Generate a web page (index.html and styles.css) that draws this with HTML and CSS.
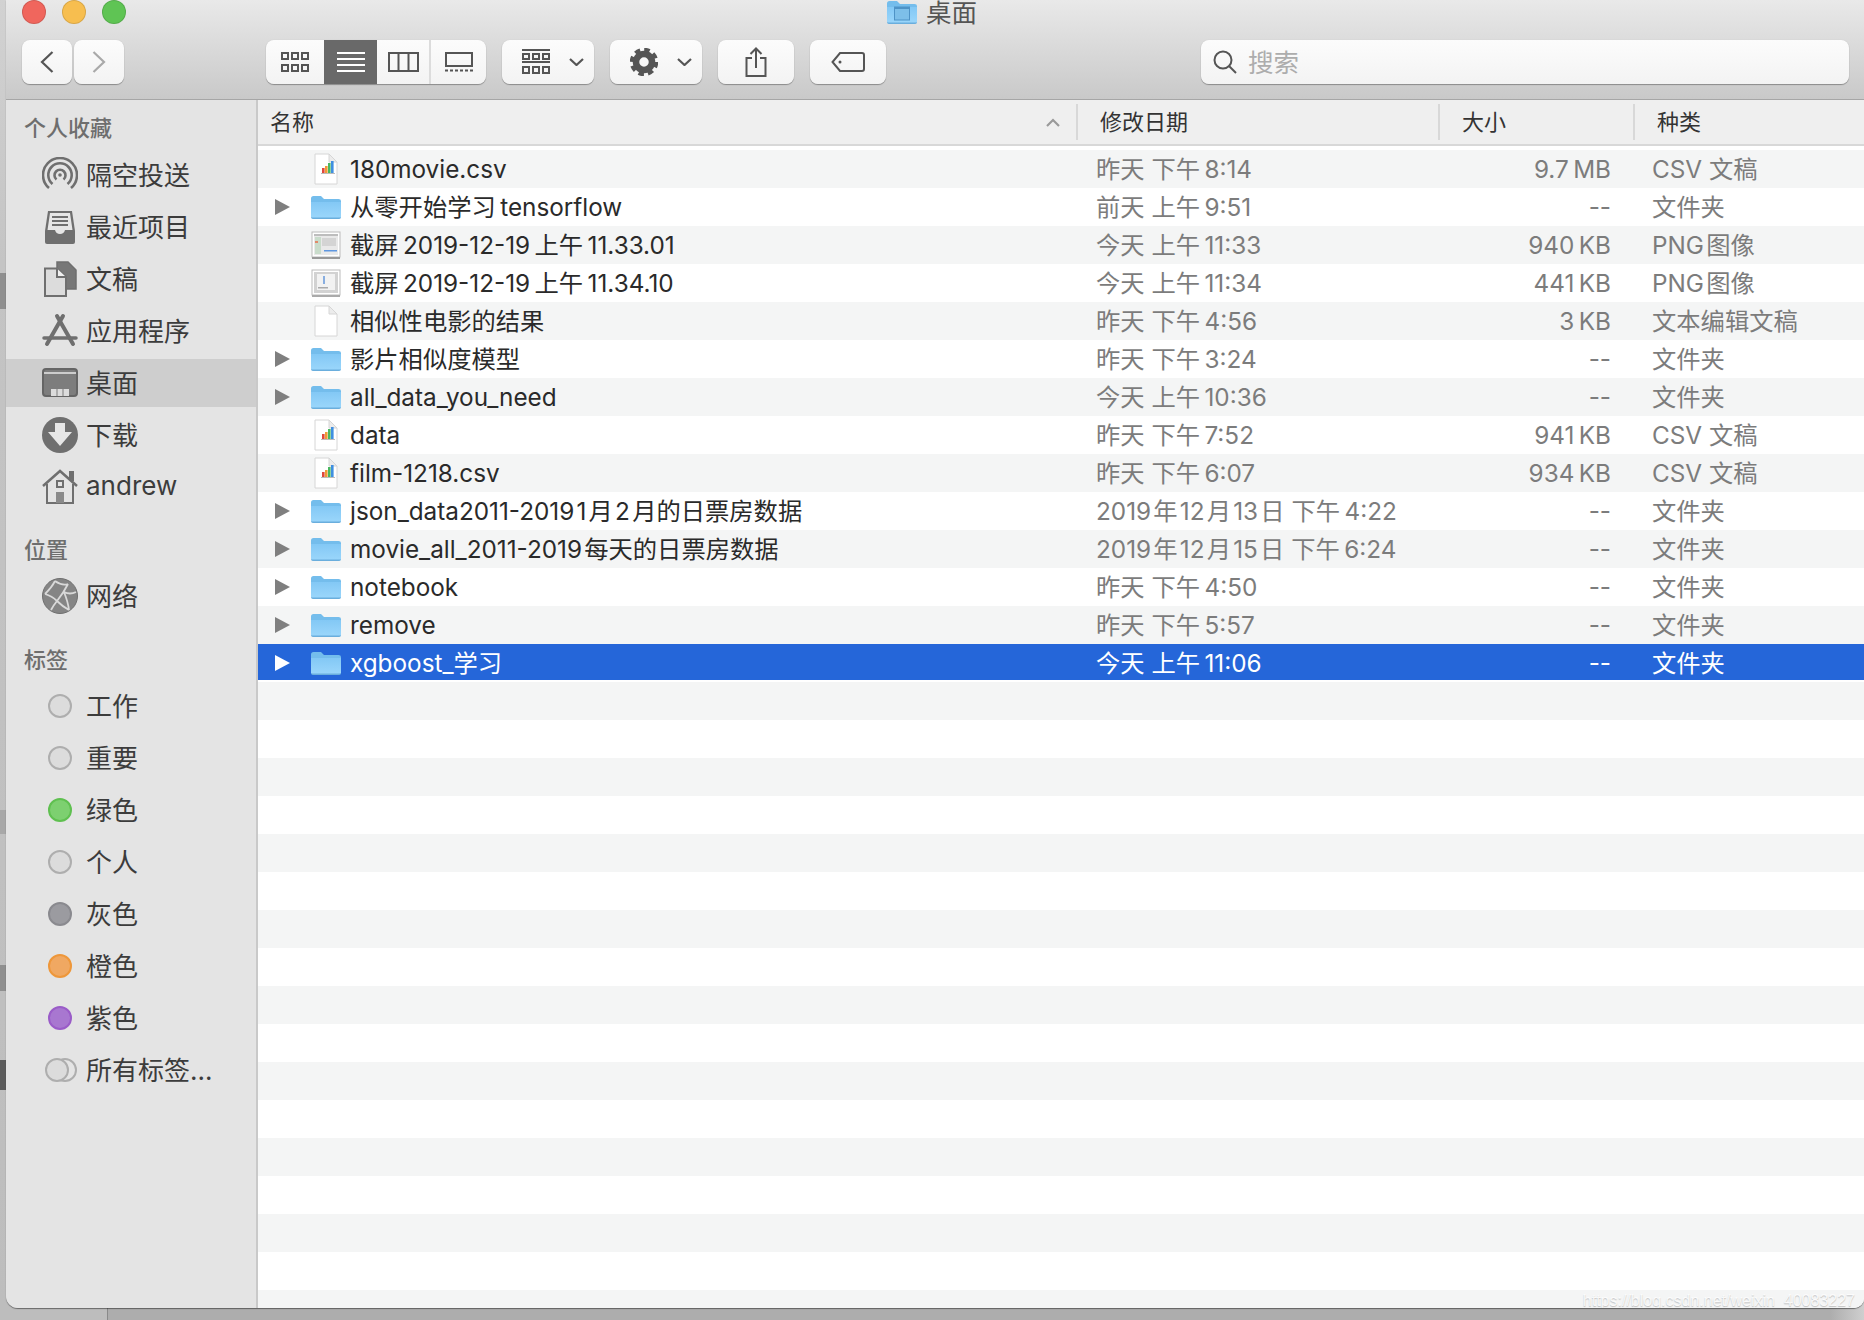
FILE: index.html
```html
<!DOCTYPE html>
<html lang="zh-CN">
<head>
    <meta charset="UTF-8">
    <title>桌面</title>
    <link rel="stylesheet" href="styles.css">
</head>
<body>
    <!-- shared icons -->
    <svg class="sprite" aria-hidden="true">
        <defs>
            <linearGradient id="folderFill" x1="0" y1="0" x2="0" y2="1">
                <stop offset="0" stop-color="#83c8f5"/>
                <stop offset="1" stop-color="#9ad6fb"/>
            </linearGradient>
            <symbol id="folder" viewBox="0 0 30 24">
                <path d="M0 3.500Q0 1 2.500 1H10l3 3H27.500Q30 4 30 6V21.500Q30 23.500 27.500 23.500H2.500Q0 23.500 0 21.500Z" fill="#74bdec"/>
                <path d="M0 7H30V21.500Q30 23 27.500 23H2.500Q0 23 0 21.500Z" fill="url(#folderFill)"/>
                <path d="M0 22.500H30V22.800Q29.500 24 27.500 24H2.500Q.5 24 0 22.800Z" fill="#6aaedd"/>
            </symbol>
            <symbol id="doc" viewBox="0 0 24 32">
                <path d="M1 1H15L23 9V31H1Z" fill="#fff" stroke="#d6d6d6"/>
                <path d="M15 1V9H23Z" fill="#ececec" stroke="#d6d6d6"/>
            </symbol>
            <symbol id="csv" viewBox="0 0 24 32">
                <use href="#doc" width="24" height="32"/>
                <rect x="8" y="15" width="2.600" height="5" fill="#e0483c"/>
                <rect x="11" y="13" width="2.600" height="7" fill="#ef9a36"/>
                <rect x="14" y="10" width="2.600" height="10" fill="#49b760"/>
                <rect x="17" y="8" width="2.600" height="12" fill="#3f8fe0"/>
                <path d="M7 20.500H21" stroke="#bbb"/>
            </symbol>
            <symbol id="shotA" viewBox="0 0 30 28">
                <rect x="1" y="1" width="28" height="25" fill="#fff" stroke="#bbb"/>
                <rect x="3" y="3" width="24" height="21" fill="#e9e9e9"/>
                <rect x="3" y="3" width="24" height="2" fill="#bdbdbd"/>
                <rect x="4" y="6" width="6" height="17" fill="#c9dccb"/>
                <rect x="4" y="10" width="3" height="2" fill="#e08a6a"/>
                <rect x="11" y="7" width="14" height="8" fill="#d4d4d4"/>
                <rect x="13" y="19" width="13" height="1.500" fill="#5f97e0"/>
                <rect x="1" y="26" width="28" height="2" fill="#999"/>
            </symbol>
            <symbol id="shotB" viewBox="0 0 30 28">
                <rect x="1" y="1" width="28" height="25" fill="#fff" stroke="#bbb"/>
                <rect x="3" y="3" width="24" height="21" fill="#d2d2d2"/>
                <rect x="6" y="5" width="18" height="16" fill="#f2f2f2"/>
                <rect x="12" y="7" width="2" height="8" fill="#88aee0"/>
                <rect x="7" y="18" width="10" height="1.500" fill="#aaa"/>
                <rect x="1" y="26" width="28" height="2" fill="#aaa"/>
            </symbol>
            <symbol id="chevron" viewBox="0 0 15 8">
                <path d="M1 1L7.500 7L14 1" fill="none" stroke="#555" stroke-width="2.200"/>
            </symbol>
        </defs>
    </svg>

    <div class="backdrop">
        <i class="ghost ghost-a"></i>
        <i class="ghost ghost-b"></i>
        <i class="ghost ghost-c"></i>
        <i class="ghost ghost-d"></i>
    </div>

    <div class="window">
        <header class="toolbar">
            <div class="titlebar">
                <div class="lights">
                    <span class="light red"></span>
                    <span class="light yellow"></span>
                    <span class="light green"></span>
                </div>
                <div class="title">
                    <svg width="30" height="24" viewBox="0 0 30 24">
                        <use href="#folder" width="30" height="24"/>
                        <rect x="7.500" y="7" width="15" height="13" fill="#7dbfe9" stroke="#4e93c6"/>
                        <rect x="7.500" y="7" width="15" height="2" fill="#4e93c6"/>
                    </svg>
                    <span>桌面</span>
                </div>
            </div>

            <div class="tools">
                <div class="nav">
                    <button class="btn nav-btn">
                        <svg width="14" height="22" viewBox="0 0 14 22"><path d="M12.500 1L2 11L12.500 21" fill="none" stroke="#555" stroke-width="2.200"/></svg>
                    </button>
                    <button class="btn nav-btn">
                        <svg width="14" height="22" viewBox="0 0 14 22"><path d="M1.500 1L12 11L1.500 21" fill="none" stroke="#a9a9a9" stroke-width="2.200"/></svg>
                    </button>
                </div>

                <div class="btn views">
                    <span class="view view-icons">
                        <svg width="28" height="20" viewBox="0 0 28 20" fill="none" stroke="#555" stroke-width="2">
                            <rect x="1" y="1" width="6" height="6"/><rect x="11" y="1" width="6" height="6"/><rect x="21" y="1" width="6" height="6"/>
                            <rect x="1" y="13" width="6" height="6"/><rect x="11" y="13" width="6" height="6"/><rect x="21" y="13" width="6" height="6"/>
                        </svg>
                    </span>
                    <span class="view view-list active">
                        <svg width="28" height="20" viewBox="0 0 28 20" stroke="#fff" stroke-width="2">
                            <path d="M0 1H28M0 7H28M0 13H28M0 19H28"/>
                        </svg>
                    </span>
                    <span class="view view-cols">
                        <svg width="31" height="20" viewBox="0 0 31 20" fill="none" stroke="#555" stroke-width="2">
                            <rect x="1" y="1" width="29" height="18"/><path d="M10.500 1V19M20.500 1V19"/>
                        </svg>
                    </span>
                    <span class="view view-gallery">
                        <svg width="28" height="20" viewBox="0 0 28 20" fill="none" stroke="#555" stroke-width="2">
                            <rect x="1" y="1" width="26" height="13"/>
                            <path d="M0 18.500H3M5 18.500H8M10 18.500H13M15 18.500H18M20 18.500H23M25 18.500H28"/>
                        </svg>
                    </span>
                </div>

                <button class="btn menu-btn arrange">
                    <svg width="28" height="26" viewBox="0 0 28 26" fill="none" stroke="#555" stroke-width="2">
                        <path d="M0 1H28M0 13H28"/>
                        <rect x="1" y="5" width="6" height="5"/><rect x="11" y="5" width="6" height="5"/><rect x="21" y="5" width="6" height="5"/>
                        <rect x="1" y="18" width="6" height="6"/><rect x="11" y="18" width="6" height="6"/><rect x="21" y="18" width="6" height="6"/>
                    </svg>
                    <svg width="15" height="8"><use href="#chevron" width="15" height="8"/></svg>
                </button>

                <button class="btn menu-btn gear">
                    <svg width="28" height="28" viewBox="0 0 28 28" fill="none" stroke="#555">
                        <circle cx="14" cy="14" r="8" stroke-width="6.500"/>
                        <circle cx="14" cy="14" r="12" stroke-width="4.500" stroke-dasharray="5.400 4"/>
                    </svg>
                    <svg width="15" height="8"><use href="#chevron" width="15" height="8"/></svg>
                </button>

                <button class="btn icon-btn">
                    <svg width="22" height="30" viewBox="0 0 22 30" fill="none" stroke="#555" stroke-width="2">
                        <path d="M7 11H1.500V29H20.500V11H15"/>
                        <path d="M11 21V1.500M5.500 7L11 1.500L16.500 7"/>
                    </svg>
                </button>

                <button class="btn icon-btn">
                    <svg width="34" height="20" viewBox="0 0 34 20" fill="none" stroke="#555" stroke-width="2">
                        <path d="M9 1H31Q33 1 33 3V17Q33 19 31 19H9L1.500 10Z"/>
                        <circle cx="9" cy="10" r="1.500" fill="#555" stroke="none"/>
                    </svg>
                </button>

                <div class="btn search">
                    <svg width="24" height="24" viewBox="0 0 24 24" fill="none" stroke="#555" stroke-width="2">
                        <circle cx="10" cy="10" r="8.500"/><path d="M16 16L23 23"/>
                    </svg>
                    <span>搜索</span>
                </div>
            </div>
        </header>

        <div class="main">
            <aside class="sidebar">
                <h3 class="side-title">个人收藏</h3>
                <ul class="side-list first">
                    <li class="side-item">
                        <svg class="side-icon" viewBox="0 0 36 36" fill="none" stroke="#6f6f6f" stroke-width="2.600">
                            <path d="M7 31A17 17 0 1 1 29 31"/>
                            <path d="M10.500 27A11.700 11.700 0 1 1 25.500 27"/>
                            <path d="M14.500 22.500A5.500 5.500 0 1 1 21.500 22.500"/>
                            <circle cx="18" cy="18" r="1.800" fill="#6f6f6f" stroke="none"/>
                        </svg>
                        隔空投送
                    </li>
                    <li class="side-item">
                        <svg class="side-icon" viewBox="0 0 36 36">
                            <path d="M6 2H30L33 22V33Q33 35 31 35H5Q3 35 3 33V22Z" fill="#6f6f6f"/>
                            <path d="M8 4H28L30.500 21H23Q22 25 18 25Q14 25 13 21H5.500Z" fill="#e6e6e6"/>
                            <path d="M10 8H26M10 12H26M10 16H26" stroke="#6f6f6f" stroke-width="2"/>
                        </svg>
                        最近项目
                    </li>
                    <li class="side-item">
                        <svg class="side-icon" viewBox="0 0 36 36">
                            <path d="M15 1H26L34 9V28H15Z" fill="#777" stroke="#6f6f6f" stroke-width="1.500"/>
                            <path d="M3 7.500H15L24 16V35H3Z" fill="#dcdcdc" stroke="#6f6f6f" stroke-width="2"/>
                            <path d="M15 7.500V16H24" fill="#f0f0f0" stroke="#6f6f6f" stroke-width="2"/>
                        </svg>
                        文稿
                    </li>
                    <li class="side-item">
                        <svg class="side-icon" viewBox="0 0 36 36" fill="none" stroke="#6f6f6f" stroke-linecap="round">
                            <path d="M15 3L31 31" stroke-width="4"/>
                            <path d="M21 3L5 31" stroke-width="4"/>
                            <path d="M2 25H34" stroke-width="3.500"/>
                        </svg>
                        应用程序
                    </li>
                    <li class="side-item selected">
                        <svg class="side-icon" viewBox="0 0 36 30">
                            <rect x="1" y="1" width="34" height="27" rx="3" fill="#7d7d7d" stroke="#656565" stroke-width="2"/>
                            <path d="M2 5H34" stroke="#e8e8e8" stroke-width="1.500"/>
                            <rect x="9" y="21" width="18" height="7" fill="#dcdcdc"/>
                            <path d="M15 21V28M21 21V28" stroke="#7d7d7d"/>
                        </svg>
                        桌面
                    </li>
                    <li class="side-item">
                        <svg class="side-icon" viewBox="0 0 36 36">
                            <circle cx="18" cy="18" r="18" fill="#6f6f6f"/>
                            <path d="M13 6H23V15H30L18 29L6 15H13Z" fill="#e6e6e6"/>
                        </svg>
                        下载
                    </li>
                    <li class="side-item">
                        <svg class="side-icon" viewBox="0 0 36 36" fill="none" stroke="#6f6f6f" stroke-width="2">
                            <path d="M1 17L18 2L35 17" stroke-width="2.500"/>
                            <path d="M28 10V3H31V12" fill="#6f6f6f"/>
                            <path d="M5 15V34H31V15"/>
                            <rect x="15" y="12" width="6" height="6"/>
                            <rect x="14" y="23" width="8" height="11" fill="#8a8a8a" stroke="none"/>
                        </svg>
                        andrew
                    </li>
                </ul>

                <h3 class="side-title second">位置</h3>
                <ul class="side-list">
                    <li class="side-item">
                        <svg class="side-icon" viewBox="0 0 36 36" fill="none">
                            <circle cx="18" cy="18" r="17.500" fill="#858585" stroke="#6f6f6f"/>
                            <path d="M3 16Q10 9 13 3M3 16Q10 18 15 23T27 32M13 3Q20 8 26 6M26 6Q22 14 15 23M22 14Q28 17 34 14M22 14Q26 24 27 32M15 23Q11 28 9 32" stroke="#d9d9d9" stroke-width="1.800"/>
                        </svg>
                        网络
                    </li>
                </ul>

                <h3 class="side-title second">标签</h3>
                <ul class="side-list">
                    <li class="side-item"><span class="tag-box"><i class="tag"></i></span>工作</li>
                    <li class="side-item"><span class="tag-box"><i class="tag"></i></span>重要</li>
                    <li class="side-item"><span class="tag-box"><i class="tag tag-green"></i></span>绿色</li>
                    <li class="side-item"><span class="tag-box"><i class="tag"></i></span>个人</li>
                    <li class="side-item"><span class="tag-box"><i class="tag tag-gray"></i></span>灰色</li>
                    <li class="side-item"><span class="tag-box"><i class="tag tag-orange"></i></span>橙色</li>
                    <li class="side-item"><span class="tag-box"><i class="tag tag-purple"></i></span>紫色</li>
                    <li class="side-item">
                        <svg class="side-icon" viewBox="0 0 36 36" fill="none" stroke="#aeaeae" stroke-width="2">
                            <circle cx="23" cy="18" r="11" fill="#e4e4e4"/>
                            <circle cx="15" cy="18" r="11" fill="#dcdcdc"/>
                        </svg>
                        所有标签...
                    </li>
                </ul>
            </aside>

            <section class="list">
                <div class="list-head">
                    <div class="head-cell head-name">名称
                        <svg width="14" height="9" viewBox="0 0 14 9"><path d="M1 8L7 2L13 8" fill="none" stroke="#9a9a9a" stroke-width="2.200"/></svg>
                    </div>
                    <div class="head-cell">修改日期</div>
                    <div class="head-cell">大小</div>
                    <div class="head-cell">种类</div>
                </div>

                <div class="list-body">
                    <div class="row">
                        <div class="name"><i class="arrow none"></i><svg class="file-icon"><use href="#csv" x="3" y="3" width="24" height="32"/></svg>180movie.csv</div>
                        <div class="date">昨天 下午&thinsp;8:14</div><div class="size">9.7&thinsp;MB</div><div class="kind">CSV 文稿</div>
                    </div>
                    <div class="row">
                        <div class="name"><i class="arrow"></i><svg class="file-icon"><use href="#folder" y="7" width="30" height="24"/></svg>从零开始学习&thinsp;tensorflow</div>
                        <div class="date">前天 上午&thinsp;9:51</div><div class="size">--</div><div class="kind">文件夹</div>
                    </div>
                    <div class="row">
                        <div class="name"><i class="arrow none"></i><svg class="file-icon"><use href="#shotA" y="5" width="30" height="28"/></svg>截屏&thinsp;2019-12-19&thinsp;上午&thinsp;11.33.01</div>
                        <div class="date">今天 上午&thinsp;11:33</div><div class="size">940&thinsp;KB</div><div class="kind">PNG&hairsp;图像</div>
                    </div>
                    <div class="row">
                        <div class="name"><i class="arrow none"></i><svg class="file-icon"><use href="#shotB" y="5" width="30" height="28"/></svg>截屏&thinsp;2019-12-19&thinsp;上午&thinsp;11.34.10</div>
                        <div class="date">今天 上午&thinsp;11:34</div><div class="size">441&thinsp;KB</div><div class="kind">PNG&hairsp;图像</div>
                    </div>
                    <div class="row">
                        <div class="name"><i class="arrow none"></i><svg class="file-icon"><use href="#doc" x="3" y="3" width="24" height="32"/></svg>相似性电影的结果</div>
                        <div class="date">昨天 下午&thinsp;4:56</div><div class="size">3&thinsp;KB</div><div class="kind">文本编辑文稿</div>
                    </div>
                    <div class="row">
                        <div class="name"><i class="arrow"></i><svg class="file-icon"><use href="#folder" y="7" width="30" height="24"/></svg>影片相似度模型</div>
                        <div class="date">昨天 下午&thinsp;3:24</div><div class="size">--</div><div class="kind">文件夹</div>
                    </div>
                    <div class="row">
                        <div class="name"><i class="arrow"></i><svg class="file-icon"><use href="#folder" y="7" width="30" height="24"/></svg>all_data_you_need</div>
                        <div class="date">今天 上午&thinsp;10:36</div><div class="size">--</div><div class="kind">文件夹</div>
                    </div>
                    <div class="row">
                        <div class="name"><i class="arrow none"></i><svg class="file-icon"><use href="#csv" x="3" y="3" width="24" height="32"/></svg>data</div>
                        <div class="date">昨天 下午&thinsp;7:52</div><div class="size">941&thinsp;KB</div><div class="kind">CSV 文稿</div>
                    </div>
                    <div class="row">
                        <div class="name"><i class="arrow none"></i><svg class="file-icon"><use href="#csv" x="3" y="3" width="24" height="32"/></svg>film-1218.csv</div>
                        <div class="date">昨天 下午&thinsp;6:07</div><div class="size">934&thinsp;KB</div><div class="kind">CSV 文稿</div>
                    </div>
                    <div class="row">
                        <div class="name"><i class="arrow"></i><svg class="file-icon"><use href="#folder" y="7" width="30" height="24"/></svg>json_data2011-2019&hairsp;1&hairsp;月&hairsp;2&hairsp;月的日票房数据</div>
                        <div class="date">2019&hairsp;年&hairsp;12&hairsp;月&hairsp;13&hairsp;日 下午&thinsp;4:22</div><div class="size">--</div><div class="kind">文件夹</div>
                    </div>
                    <div class="row">
                        <div class="name"><i class="arrow"></i><svg class="file-icon"><use href="#folder" y="7" width="30" height="24"/></svg>movie_all_2011-2019&hairsp;每天的日票房数据</div>
                        <div class="date">2019&hairsp;年&hairsp;12&hairsp;月&hairsp;15&hairsp;日 下午&thinsp;6:24</div><div class="size">--</div><div class="kind">文件夹</div>
                    </div>
                    <div class="row">
                        <div class="name"><i class="arrow"></i><svg class="file-icon"><use href="#folder" y="7" width="30" height="24"/></svg>notebook</div>
                        <div class="date">昨天 下午&thinsp;4:50</div><div class="size">--</div><div class="kind">文件夹</div>
                    </div>
                    <div class="row">
                        <div class="name"><i class="arrow"></i><svg class="file-icon"><use href="#folder" y="7" width="30" height="24"/></svg>remove</div>
                        <div class="date">昨天 下午&thinsp;5:57</div><div class="size">--</div><div class="kind">文件夹</div>
                    </div>
                    <div class="row selected">
                        <div class="name"><i class="arrow"></i><svg class="file-icon"><use href="#folder" y="7" width="30" height="24"/></svg>xgboost_学习</div>
                        <div class="date">今天 上午&thinsp;11:06</div><div class="size">--</div><div class="kind">文件夹</div>
                    </div>
                </div>
            </section>
        </div>

        <div class="watermark">https://blog.csdn.net/weixin_40083227</div>
    </div>
</body>
</html>
```

FILE: styles.css
```css
* {
    box-sizing: border-box;
}
body {
    margin: 0;
    width: 1864px;
    height: 1320px;
    overflow: hidden;
    position: relative;
    font-family: Inter, "Noto Sans CJK SC", sans-serif;
    background: linear-gradient(to right, #bdbdbd 0 107px, #8a8a8a 107px 108px, #adadad 108px 1830px, #cfcfcf);
}
.sprite {
    position: absolute;
    width: 0;
    height: 0;
}

/* what shows of the windows behind, left of this one */
.backdrop {
    position: absolute;
    left: 0;
    top: 0;
    width: 6px;
    height: 1308px;
    background: linear-gradient(#d2d2d2, #c4c4c4 20%, #bdbdbd);
}
.ghost {
    position: absolute;
    left: 0;
    width: 6px;
    background: #8f8f8f;
}
.ghost-a {
    top: 273px;
    height: 36px;
}
.ghost-b {
    top: 810px;
    height: 24px;
    background: #a8a8a8;
}
.ghost-c {
    top: 965px;
    height: 26px;
}
.ghost-d {
    top: 1060px;
    height: 30px;
    background: #5c5c5c;
}

.window {
    position: relative;
    margin-left: 6px;
    width: 1858px;
    height: 1308px;
    display: flex;
    flex-direction: column;
    overflow: hidden;
    border-radius: 0 0 10px 12px;
    box-shadow: 0 1px 1px rgba(0, 0, 0, 0.45);
}

/* toolbar */
.toolbar {
    height: 100px;
    flex: none;
    background: linear-gradient(#e9e9e9, #c9c9c9);
    border-bottom: 1px solid #a6a6a6;
}
.titlebar {
    height: 40px;
    display: grid;
    grid-template-columns: 1fr auto 1fr;
    align-items: start;
}
.lights {
    display: flex;
    gap: 16px;
    padding-left: 16px;
}
.light {
    width: 24px;
    height: 24px;
    border-radius: 50%;
    border: 1px solid rgba(0, 0, 0, 0.12);
}
.red {
    background: #f0665d;
}
.yellow {
    background: #f7be4f;
}
.green {
    background: #5fc454;
}
.title {
    display: flex;
    align-items: flex-start;
    gap: 9px;
    font-size: 25.500px;
    color: #555;
    transform: translateX(-3px);
}
.title span {
    line-height: 26px;
    height: 26px;
}
.tools {
    display: flex;
    height: 44px;
    padding: 0 15px 0 16px;
}
.btn {
    padding: 0;
    border: none;
    border-radius: 8px;
    height: 44px;
    background: linear-gradient(#fcfcfc, #f3f3f3);
    box-shadow: 0 1px 1px rgba(0, 0, 0, 0.32), 0 0 1px rgba(0, 0, 0, 0.15);
    display: flex;
    align-items: center;
    justify-content: center;
}
.nav {
    display: flex;
    gap: 2px;
}
.nav-btn {
    width: 50px;
}
.views {
    margin-left: 142px;
    width: 220px;
    overflow: hidden;
    justify-content: flex-start;
}
.view {
    height: 44px;
    display: flex;
    align-items: center;
    justify-content: center;
}
.view-icons {
    width: 58px;
}
.view-list {
    width: 53px;
}
.view-cols {
    width: 54px;
    border-right: 2px solid #dcdcdc;
}
.view-gallery {
    width: 55px;
}
.active {
    background: #696969;
}
.menu-btn {
    justify-content: flex-start;
}
.arrange {
    margin-left: 16px;
    width: 92px;
    padding-left: 20px;
    gap: 19px;
}
.gear {
    margin-left: 16px;
    width: 92px;
    padding-left: 20px;
    gap: 19px;
}
.icon-btn {
    margin-left: 16px;
    width: 76px;
}
.search {
    margin-left: auto;
    width: 648px;
    justify-content: flex-start;
    padding-left: 12px;
    gap: 11px;
    font-size: 25.500px;
    color: #adadad;
}
.search span {
    margin-top: -3px;
}

.main {
    flex: 1;
    display: flex;
    min-height: 0;
}

/* sidebar */
.sidebar {
    width: 252px;
    flex: none;
    padding-top: 8px;
    background: #e4e4e4;
    border-right: 2px solid #c9c9c9;
}
.side-title {
    margin: 0;
    height: 40px;
    line-height: 40px;
    padding-left: 18px;
    font-size: 22px;
    font-weight: 500;
    color: #6e6e6e;
}
.second {
    margin-top: 19px;
}
.side-list {
    list-style: none;
    margin: 2px 0 0;
    padding: 0;
    display: flex;
    flex-direction: column;
    gap: 4px;
}
.side-list.first {
    margin-top: 3px;
}
.side-list + .second {
    margin-top: 20px;
}
.side-list.first + .second {
    margin-top: 19px;
}
.side-item {
    height: 48px;
    padding: 0 0 4px 36px;
    display: flex;
    align-items: center;
    gap: 8px;
    font-size: 26px;
    color: #3c3c3c;
}
.side-item.selected {
    background: #cecece;
}
.side-icon {
    width: 36px;
    height: 36px;
    flex: none;
    margin-bottom: -4px;
}
.tag-box {
    width: 36px;
    height: 36px;
    flex: none;
    margin-bottom: -4px;
    display: flex;
    align-items: center;
    justify-content: center;
}
.tag {
    width: 24px;
    height: 24px;
    border-radius: 50%;
    background: #dcdcdc;
    border: 2px solid #aeaeae;
}
.tag-green {
    background: #7dd070;
    border-color: #5fc050;
}
.tag-gray {
    background: #9b9ba0;
    border-color: #8a8a8f;
}
.tag-orange {
    background: #f0a862;
    border-color: #ee973a;
}
.tag-purple {
    background: #a877d0;
    border-color: #9a5cc8;
}

/* file list */
.list {
    flex: 1;
    display: flex;
    flex-direction: column;
    min-width: 0;
    background: #fff;
}
.list-head,
.row {
    display: grid;
    grid-template-columns: 818px 362px 195px 1fr;
}
.list-head {
    height: 46px;
    background: #efefef;
    border-bottom: 2px solid #d8d8d8;
    flex: none;
    align-items: center;
}
.head-cell {
    height: 36px;
    line-height: 36px;
    padding-left: 22px;
    font-size: 22px;
    color: #333;
    border-left: 2px solid #d8d8d8;
}
.head-name {
    display: flex;
    align-items: center;
    justify-content: space-between;
    padding: 0 16px 0 12px;
    border-left: none;
}
.list-body {
    flex: 1;
    margin-top: 4px;
    background: repeating-linear-gradient(#f4f5f5 0 38px, #fff 38px 76px);
}
.row {
    height: 38px;
    padding-top: 1px;
    align-items: center;
    font-size: 24.300px;
    line-height: 37px;
    color: #7c7c7c;
}
.name {
    display: flex;
    align-items: center;
    padding-left: 17px;
    color: #2a2a2a;
    white-space: nowrap;
}
.arrow {
    width: 0;
    height: 0;
    margin: -1px 21px 0 0;
    border-left: 15px solid #7f7f7f;
    border-top: 8px solid transparent;
    border-bottom: 8px solid transparent;
}
.arrow.none {
    border-left-color: transparent;
}
.file-icon {
    width: 30px;
    height: 38px;
    margin: -1px 9px 0 0;
    flex: none;
}
.date {
    padding-left: 20px;
    white-space: nowrap;
}
.size {
    text-align: right;
    padding-right: 22px;
}
.kind {
    padding-left: 19px;
}
.row.selected {
    height: 36px;
    margin-bottom: 2px;
    padding-top: 1px;
    line-height: 35px;
    background: #2566d9;
    color: #fff;
}
.row.selected .name {
    color: #fff;
}
.row.selected .arrow {
    border-left-color: #fff;
}
.watermark {
    position: absolute;
    right: 9px;
    bottom: -2px;
    font-family: "Liberation Sans", sans-serif;
    font-size: 16px;
    color: rgba(255, 255, 255, 0.85);
    text-shadow: 0 1px 1px rgba(0, 0, 0, 0.22);
}
```
